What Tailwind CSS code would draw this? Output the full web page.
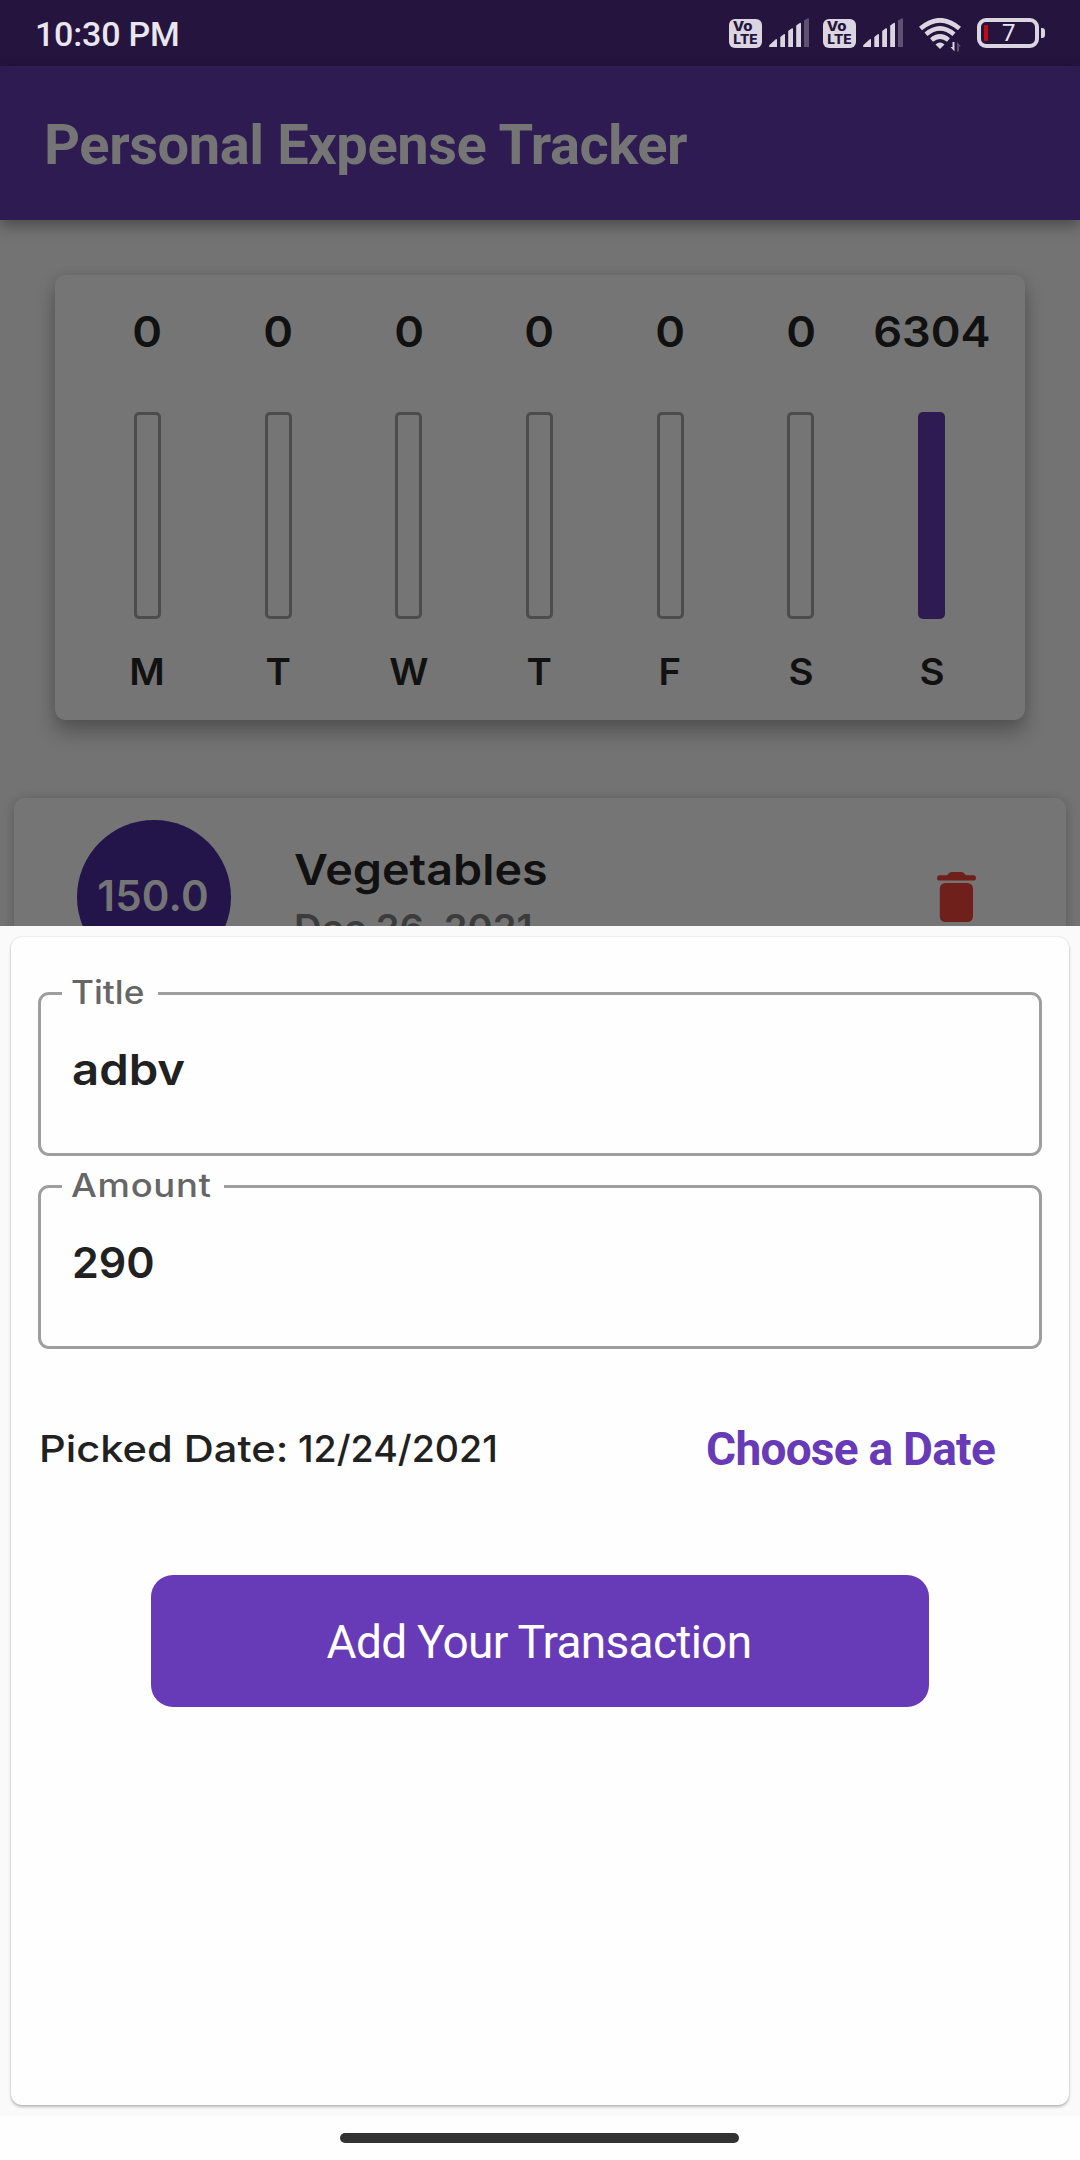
<!DOCTYPE html>
<html lang="en">
<head>
<meta charset="utf-8">
<title>Personal Expense Tracker</title>
<script src="https://cdn.jsdelivr.net/npm/@tailwindcss/browser@4"></script>
</head>
<body class="relative h-[2160px] w-[1080px] overflow-hidden bg-[#737373] font-['Inter',sans-serif] text-[#111111]">

<svg class="hidden">
  <symbol id="signal" viewBox="0 0 40 30">
    <g fill="#dad5e0">
      <path d="M0 28.500Q0 27.500 1 26.500L6.500 21.500Q8 20.500 8 22V29H.5Z"/>
      <path d="M11.300 19 14.500 16.400Q16 15.600 16 17V29H11.300Z"/>
      <path d="M19.200 13 22.500 10.500Q24 9.600 24 11V29H19.200Z"/>
      <path d="M27.200 7.500 30.500 5.200Q32 4.300 32 5.700V29H27.200Z"/>
    </g>
    <path fill="#5f5174" d="M35 2.500 38.500.4Q40-.3 40 1V29H35Z"/>
  </symbol>
</svg>

<div class="flex h-[66px] items-center justify-between bg-[#24143e] pl-[35px] pr-[35px] text-[#e9e6ee]">
  <span class="mt-[2px] font-['Roboto',sans-serif] text-[34px] leading-[40px] font-medium tracking-[-0.2px]">10:30 PM</span>
  <div class="flex items-center">
    <div class="flex h-[29px] w-[33px] flex-col items-center justify-center rounded-[6px] bg-[#dad5e0] font-['Inter',sans-serif] text-[13px] leading-[13px] font-extrabold text-[#24143e]"><span class="-ml-[5px] scale-x-[1.15]">Vo</span><span class="scale-x-[1.06]">LTE</span></div>
    <svg class="ml-[7px] h-[30px] w-[40px]"><use href="#signal"/></svg>
    <div class="ml-[14px] flex h-[29px] w-[33px] flex-col items-center justify-center rounded-[6px] bg-[#dad5e0] font-['Inter',sans-serif] text-[13px] leading-[13px] font-extrabold text-[#24143e]"><span class="-ml-[5px] scale-x-[1.15]">Vo</span><span class="scale-x-[1.06]">LTE</span></div>
    <svg class="ml-[7px] h-[30px] w-[40px]"><use href="#signal"/></svg>
    <svg class="mt-[3px] ml-[16px] h-[34px] w-[44px]" viewBox="0 0 44 34">
      <g fill="none" stroke="#dad5e0" stroke-width="4.600">
        <path d="M1.500 10.500Q21 -6 40.500 10.500"/>
        <path d="M7 16.300Q21 4.500 35 16.300"/>
        <path d="M12.500 22Q21 15 29.500 22"/>
      </g>
      <path fill="#dad5e0" d="M16.500 26.500Q21 22.500 25.500 26.500L21 31Z"/>
      <path fill="#dad5e0" d="M35.500 24V33.500L31.500 29H33.500V24Z"/>
      <path fill="#5f5174" d="M38 24 42 28.500H40V33.500H38Z"/>
    </svg>
    <div class="ml-[14px] flex h-[30px] w-[62px] items-center rounded-[9px] border-4 border-[#dad5e0] pl-[3px]">
      <span class="h-[16px] w-[4px] rounded-[1px] bg-[#c20a12]"></span>
      <span class="ml-[14px] font-['Roboto',sans-serif] text-[24px] leading-[24px]">7</span>
    </div>
    <span class="ml-[2px] h-[10px] w-[4px] rounded-r-[3px] bg-[#dad5e0]"></span>
  </div>
</div>

<header class="relative flex h-[154px] items-center bg-[#2e1b52] pl-[44px] shadow-[0_6px_14px_rgba(0,0,0,0.35)]">
  <h1 class="mt-[3px] font-['Roboto',sans-serif] text-[56px] leading-[64px] font-bold tracking-[-0.42px] text-[#757575]">Personal Expense Tracker</h1>
</header>

<main>
  <section class="mx-[55px] mt-[55px] grid h-[445px] grid-cols-7 rounded-[11px] bg-[#757575] pt-[34px] pr-[28px] pl-[27px] shadow-[0_12px_20px_rgba(0,0,0,0.28),0_0_12px_rgba(0,0,0,0.07)]" id="week"></section>

  <section class="mx-[14px] mt-[78px] flex h-[198px] rounded-[11px] bg-[#757575] pt-[22px] pl-[63px] shadow-[0_2px_12px_rgba(0,0,0,0.22)]">
    <div class="flex size-[154px] items-center justify-center rounded-full bg-[#23144a] pr-[2px] pb-[3px] text-[42px] font-semibold tracking-[0.2px] text-[#757575]">150.0</div>
    <div class="ml-[63px] flex-1 pt-[24px]">
      <p class="w-fit origin-left scale-x-[1.085] text-[43px] leading-[50px] font-semibold">Vegetables</p>
      <p class="mt-[13px] w-fit origin-left scale-x-[1.03] text-[37px] leading-[42px] font-semibold text-[#3c3c3c]">Dec 26, 2021</p>
    </div>
    <svg class="mt-[52px] mr-[90px] h-[50px] w-[39px]" viewBox="0 0 39 50" fill="#70201a">
      <path d="M10 3.200Q12.500 0 14.500 0H24.500Q26.500 0 29 3.200H36.300A2.700 2.700 0 0 1 36.300 8.600H2.700A2.700 2.700 0 0 1 2.700 3.200Z"/>
      <rect x="2.800" y="11" width="33.200" height="39" rx="5.500"/>
    </svg>
  </section>
</main>

<div class="absolute inset-x-0 top-[926px] bottom-0 flex flex-col bg-[#fefefe]">
  <div class="bg-[#fafafa] px-[11px] pt-[11px] pb-[11px]">
    <div class="h-[1168px] rounded-[11px] bg-[#fefefe] px-[27px] pt-[37px] shadow-[0_2px_3px_rgba(0,0,0,0.25),0_0_2px_rgba(0,0,0,0.14)]">
      <fieldset class="h-[182px] rounded-[11px] border-[3px] border-[#9e9e9e] pl-[21px]">
        <legend class="h-[38px] w-[96px] pl-[9px] text-[32px] leading-[38px] font-medium text-[#666666]"><span class="inline-block origin-left scale-x-[1.1]">Title</span></legend>
        <p class="mt-[32px] ml-[10px] w-fit origin-left scale-x-[1.1] text-[43px] leading-[50px] font-semibold text-[#212121]">adbv</p>
      </fieldset>
      <fieldset class="mt-[11px] h-[182px] rounded-[11px] border-[3px] border-[#9e9e9e] pl-[21px]">
        <legend class="h-[38px] w-[162px] pl-[9px] text-[32px] leading-[38px] font-medium text-[#666666]"><span class="inline-block origin-left scale-x-[1.14] tracking-[0.6px]">Amount</span></legend>
        <p class="mt-[32px] ml-[10px] w-fit text-[43px] leading-[50px] font-semibold text-[#212121]">290</p>
      </fieldset>
      <div class="mt-[74px] flex h-[52px] items-center justify-between pr-[47px] pl-px">
        <div class="flex text-[37px] font-medium text-[#212121]">
          <span class="w-[259px] origin-left whitespace-pre"><span class="inline-block origin-left scale-x-[1.125]">Picked Date: </span></span>
          <span class="origin-left scale-x-[1.015]">12/24/2021</span>
        </div>
        <span class="font-['Roboto',sans-serif] text-[46px] font-bold tracking-[-0.75px] text-[#673ab7]">Choose a Date</span>
      </div>
      <div class="mx-auto mt-[100px] flex h-[132px] w-[778px] items-center justify-center rounded-[22px] bg-[#673ab7] pt-[2px] pr-[2px]">
        <span class="font-['Roboto',sans-serif] text-[46px] tracking-[-0.7px] text-white">Add Your Transaction</span>
      </div>
    </div>
  </div>
  <div class="flex flex-1 justify-center pt-[17px] pr-[2px]">
    <span class="h-[10px] w-[399px] rounded-full bg-[#333333]"></span>
  </div>
</div>

<script>
  const days = [["M", 0, 0], ["T", 0, 0], ["W", 0, 0], ["T", 0, 0], ["F", 0, 0], ["S", 0, 0], ["S", 6304, 100]];
  document.getElementById("week").innerHTML = days.map(([day, total, share]) => `
    <div class="flex flex-col items-center">
      <span class="scale-x-[1.05] text-[43px] leading-[44px] font-semibold">${total}</span>
      <div class="mt-[59px] flex h-[207px] w-[27px] flex-col justify-end overflow-hidden rounded-[5px] ${share ? "" : "border-[3px] border-[#4c4c4c]"}">
        <div class="bg-[#2e1b52]" style="height:${share}%"></div>
      </div>
      <span class="mt-[34px] scale-x-[1.04] text-[37px] leading-[38px] font-semibold">${day}</span>
    </div>`).join("");
</script>
</body>
</html>
